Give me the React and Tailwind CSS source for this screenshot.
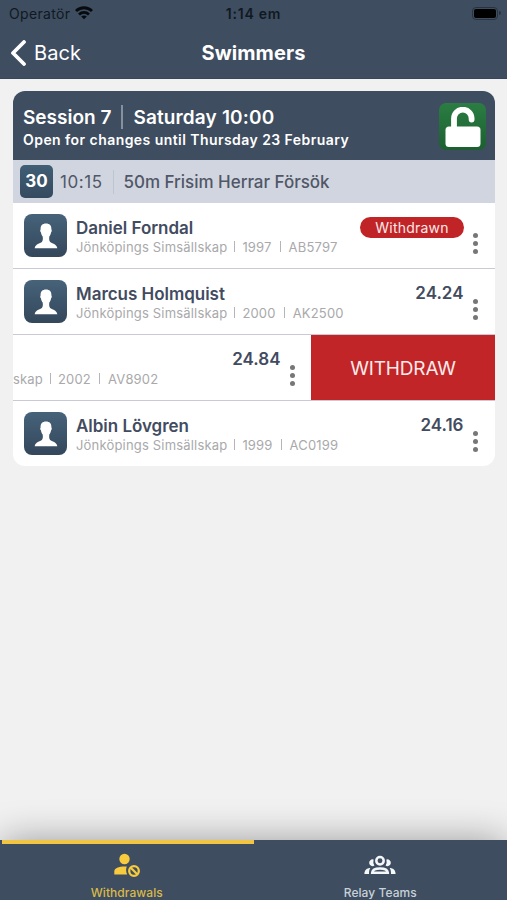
import React from "react";

const swimmers = [
  { name: "Daniel Forndal", club: "Jönköpings Simsällskap", year: "1997", code: "AB5797", withdrawn: true },
  { name: "Marcus Holmquist", club: "Jönköpings Simsällskap", year: "2000", code: "AK2500", time: "24.24" },
  { club: "skap", year: "2002", code: "AV8902", time: "24.84", swiped: true },
  { name: "Albin Lövgren", club: "Jönköpings Simsällskap", year: "1999", code: "AC0199", time: "24.16" },
];

const Avatar = () => (
  <div className="mt-[11px] ml-[11px] flex h-[43px] w-[43px] shrink-0 items-center justify-center rounded-[8px] bg-gradient-to-b from-[#46637a] to-[#34475b]">
    <svg viewBox="0 0 24 26" className="h-[26px] w-[24px]" fill="#fff">
      <path d="M12 0.5C8.4 0.5 6.4 2.6 6.6 6.4C6 6.8 6.2 8.8 6.9 9.3C7.2 11.2 7.9 12.6 8.7 13.5C9 16 8.9 18 7.8 19C6.2 20.3 1.2 21 0.7 25.3H23.3C22.8 21 17.8 20.3 16.2 19C15.1 18 15 16 15.3 13.5C16.1 12.6 16.8 11.2 17.1 9.3C17.8 8.8 18 6.8 17.4 6.4C17.6 2.6 15.6 0.5 12 0.5Z" />
    </svg>
  </div>
);

const Dots = () => (
  <div className="mt-[30px] flex w-[5px] shrink-0 flex-col gap-[3px]">
    <i className="h-[5px] w-[5px] rounded-full bg-[#777]" />
    <i className="h-[5px] w-[5px] rounded-full bg-[#777]" />
    <i className="h-[5px] w-[5px] rounded-full bg-[#777]" />
  </div>
);

const Details = ({ swimmer }) => (
  <p className="flex text-[13px] leading-[16px] tracking-[0.18px] whitespace-nowrap text-[#a9a9ab]">
    <span>{swimmer.club}</span>
    <span className="mx-[7px] mt-[2px] h-[11px] w-px bg-[#b5b5b8]" />
    <span>{swimmer.year}</span>
    <span className="mx-[8px] mt-[2px] h-[11px] w-px bg-[#b5b5b8]" />
    <span>{swimmer.code}</span>
  </p>
);

const SwimmerRow = ({ swimmer }) => (
  <div className="flex h-[66px] border-b border-[#c9cad6] last:h-[65px] last:border-b-0">
    {swimmer.swiped ? (
      <div className="pt-[36px]">
        <Details swimmer={swimmer} />
      </div>
    ) : (
      <>
        <Avatar />
        <div className="ml-[9px] pt-[14px]">
          <p className="text-[17px] leading-[22px] font-semibold tracking-[-0.03px] whitespace-nowrap text-[#424b5f]">{swimmer.name}</p>
          <Details swimmer={swimmer} />
        </div>
      </>
    )}
    <div className="ml-auto flex">
      {swimmer.withdrawn ? (
        <span className="mt-[14px] mr-[9px] flex h-[21px] w-[104px] items-center justify-center rounded-full bg-[#c12427] text-[14px] tracking-[0.2px] text-[#fbe9e9]">
          Withdrawn
        </span>
      ) : (
        <span className="mt-[13px] mr-[9.5px] text-[17px] leading-[22px] font-semibold text-[#424b5f]">{swimmer.time}</span>
      )}
      <Dots />
    </div>
    {swimmer.swiped ? (
      <button className="ml-[16px] w-[184px] bg-[#c12528] pt-[3px] text-[19px] tracking-[-0.15px] text-[#fbeaea]">WITHDRAW</button>
    ) : (
      <div className="w-[17px]" />
    )}
  </div>
);

const WithdrawIcon = () => (
  <svg viewBox="0 0 28 24" className="h-[24px] w-[28px]" fill="none">
    <circle cx="11.5" cy="6" r="5.2" fill="#f8cb3e" />
    <path d="M1.3 21.5V18.5C1.3 14.7 6.3 13.2 13.8 13.5C12.8 15.6 12.8 19 14.2 21.5Z" fill="#f8cb3e" />
    <circle cx="21" cy="18" r="4.8" stroke="#f8cb3e" strokeWidth="2.3" />
    <path d="M17.8 14.8L24.2 21.2" stroke="#f8cb3e" strokeWidth="2.3" />
  </svg>
);

const TeamIcon = () => (
  <svg viewBox="0 0 32 20" className="h-[20px] w-[32px]" fill="#f4f8fb">
    <circle cx="16" cy="5.7" r="3.7" fill="none" stroke="#f4f8fb" strokeWidth="2.5" />
    <path d="M9.6 4.5A3.4 3.4 0 1 0 10.4 10.6A8 8 0 0 1 9.6 4.5Z" />
    <path d="M22.4 4.5A3.4 3.4 0 1 1 21.6 10.6A8 8 0 0 0 22.4 4.5Z" />
    <path d="M6.3 13C3 13 0.4 15 0.4 19H5C5 16.7 5.2 14.7 6.3 13Z" />
    <path d="M25.7 13C29 13 31.6 15 31.6 19H27C27 16.7 26.8 14.7 25.7 13Z" />
    <path d="M8.2 17.7C8.5 14.3 12 13.5 16 13.5S23.5 14.3 23.8 17.7Z" fill="none" stroke="#f4f8fb" strokeWidth="2.5" />
  </svg>
);

const App = () => {
  return (
    <div className="flex h-[900px] w-full flex-col overflow-hidden bg-[#f1f1f1] font-['Inter',sans-serif]">
      <header className="h-[79px] shrink-0 border-b border-[#35475a] bg-[#3e4d5f] text-white">
        <div className="grid h-[28px] grid-cols-3 items-center px-[9px] text-[14px] text-[#101922]">
          <div className="flex items-center gap-[5px]">
            <span className="pb-[2px] tracking-[0.35px]">Operatör</span>
            <svg viewBox="0 0 18 14" className="mb-[2px] h-[14px] w-[18px]" fill="none" stroke="#070b0f" strokeWidth="2.8">
              <path d="M1 5.1C5.6 .6 12.4 .6 17 5.1" />
              <path d="M4 8.5C7 5.7 11 5.7 14 8.5" />
              <path d="M9 13.2L6.2 10.5C7.8 9 10.2 9 11.8 10.5Z" fill="#070b0f" stroke="none" />
            </svg>
          </div>
          <span className="pb-[2px] text-center font-semibold tracking-[0.75px]">1:14 em</span>
          <div className="mr-[-3px] mb-[2px] flex items-center gap-px justify-self-end">
            <div className="h-[13px] w-[26px] rounded-[4px] border border-[#29333e] p-px">
              <div className="h-full rounded-[2px] bg-black" />
            </div>
            <i className="h-[4px] w-[2px] rounded-r-full bg-[#29333e]" />
          </div>
        </div>
        <div className="grid h-[50px] grid-cols-3 items-center px-[10px]">
          <div className="flex items-center gap-[7px]">
            <svg viewBox="0 0 17 26" className="h-[26px] w-[17px]" fill="none" stroke="#fff" strokeWidth="3.8" strokeLinecap="round" strokeLinejoin="round">
              <path d="M14 2L3 13L14 24" />
            </svg>
            <span className="text-[20px] tracking-[0.1px]">Back</span>
          </div>
          <h1 className="text-center text-[20px] font-bold tracking-[0.1px]">Swimmers</h1>
        </div>
      </header>

      <main className="flex-1 pt-[12px] pr-[12px] pl-[13px]">
        <section className="overflow-hidden rounded-[12px] bg-white">
          <div className="flex h-[69px] items-start justify-between bg-[#3e4d5f] pt-[12px] pr-[9px] pl-[10px] text-white">
            <div className="pt-[2px]">
              <div className="flex h-[24px] items-center text-[19px] font-semibold">
                <span className="pt-[2px]">Session 7</span>
                <span className="mx-[10px] h-[24px] w-[2px] bg-[#8591a0]" />
                <span className="pt-[2px] tracking-[0.15px]">Saturday 10:00</span>
              </div>
              <p className="text-[14px] leading-[22px] font-semibold tracking-[0.44px]">Open for changes until Thursday 23 February</p>
            </div>
            <div className="flex h-[47px] w-[47px] items-center justify-center rounded-[7px] bg-gradient-to-b from-[#2b7d43] to-[#1c5f30]">
              <svg viewBox="0 0 36 40" className="h-[40px] w-[36px]">
                <path d="M9 22V11.5A8.8 8.8 0 0 1 26.6 11.5V12.5" fill="none" stroke="#fff" strokeWidth="5.8" strokeLinecap="round" />
                <rect x="0.5" y="19.5" width="35" height="20.5" rx="3.5" fill="#fff" />
              </svg>
            </div>
          </div>
          <div className="flex h-[43px] items-center bg-[#d0d5df] pl-[7px] text-[17px] text-[#505767]">
            <span className="flex h-[33px] w-[33px] items-center justify-center rounded-[5px] bg-gradient-to-b from-[#405e75] to-[#354a5f] pt-px font-bold text-white">30</span>
            <span className="ml-[7px] pt-[2px] tracking-[0.55px]">10:15</span>
            <span className="mx-[10px] h-[24px] w-px bg-[#bfc5d0]" />
            <span className="pt-[2px] font-medium tracking-[-0.03px]">50m Frisim Herrar Försök</span>
          </div>
          {swimmers.map((swimmer) => (
            <SwimmerRow key={swimmer.code} swimmer={swimmer} />
          ))}
        </section>
      </main>

      <nav className="grid h-[60px] shrink-0 grid-cols-2 bg-[#3e4d5f] shadow-[0_0_38px_-2px_rgba(0,0,0,0.4)]">
        <div className="ml-[2px] flex flex-col items-center border-t-4 border-[#f1c443] pt-[9px] pr-[2px] text-[#d9b94b]">
          <div className="h-[26px]">
            <WithdrawIcon />
          </div>
          <span className="mt-[6px] text-[12px] leading-[16px] font-medium tracking-[0.05px]">Withdrawals</span>
        </div>
        <div className="flex flex-col items-center pt-[15px] text-[#c8d1da]">
          <div className="h-[24px]">
            <TeamIcon />
          </div>
          <span className="mt-[6px] text-[12px] leading-[16px] font-medium tracking-[0.05px]">Relay Teams</span>
        </div>
      </nav>
    </div>
  );
};

export default App;
